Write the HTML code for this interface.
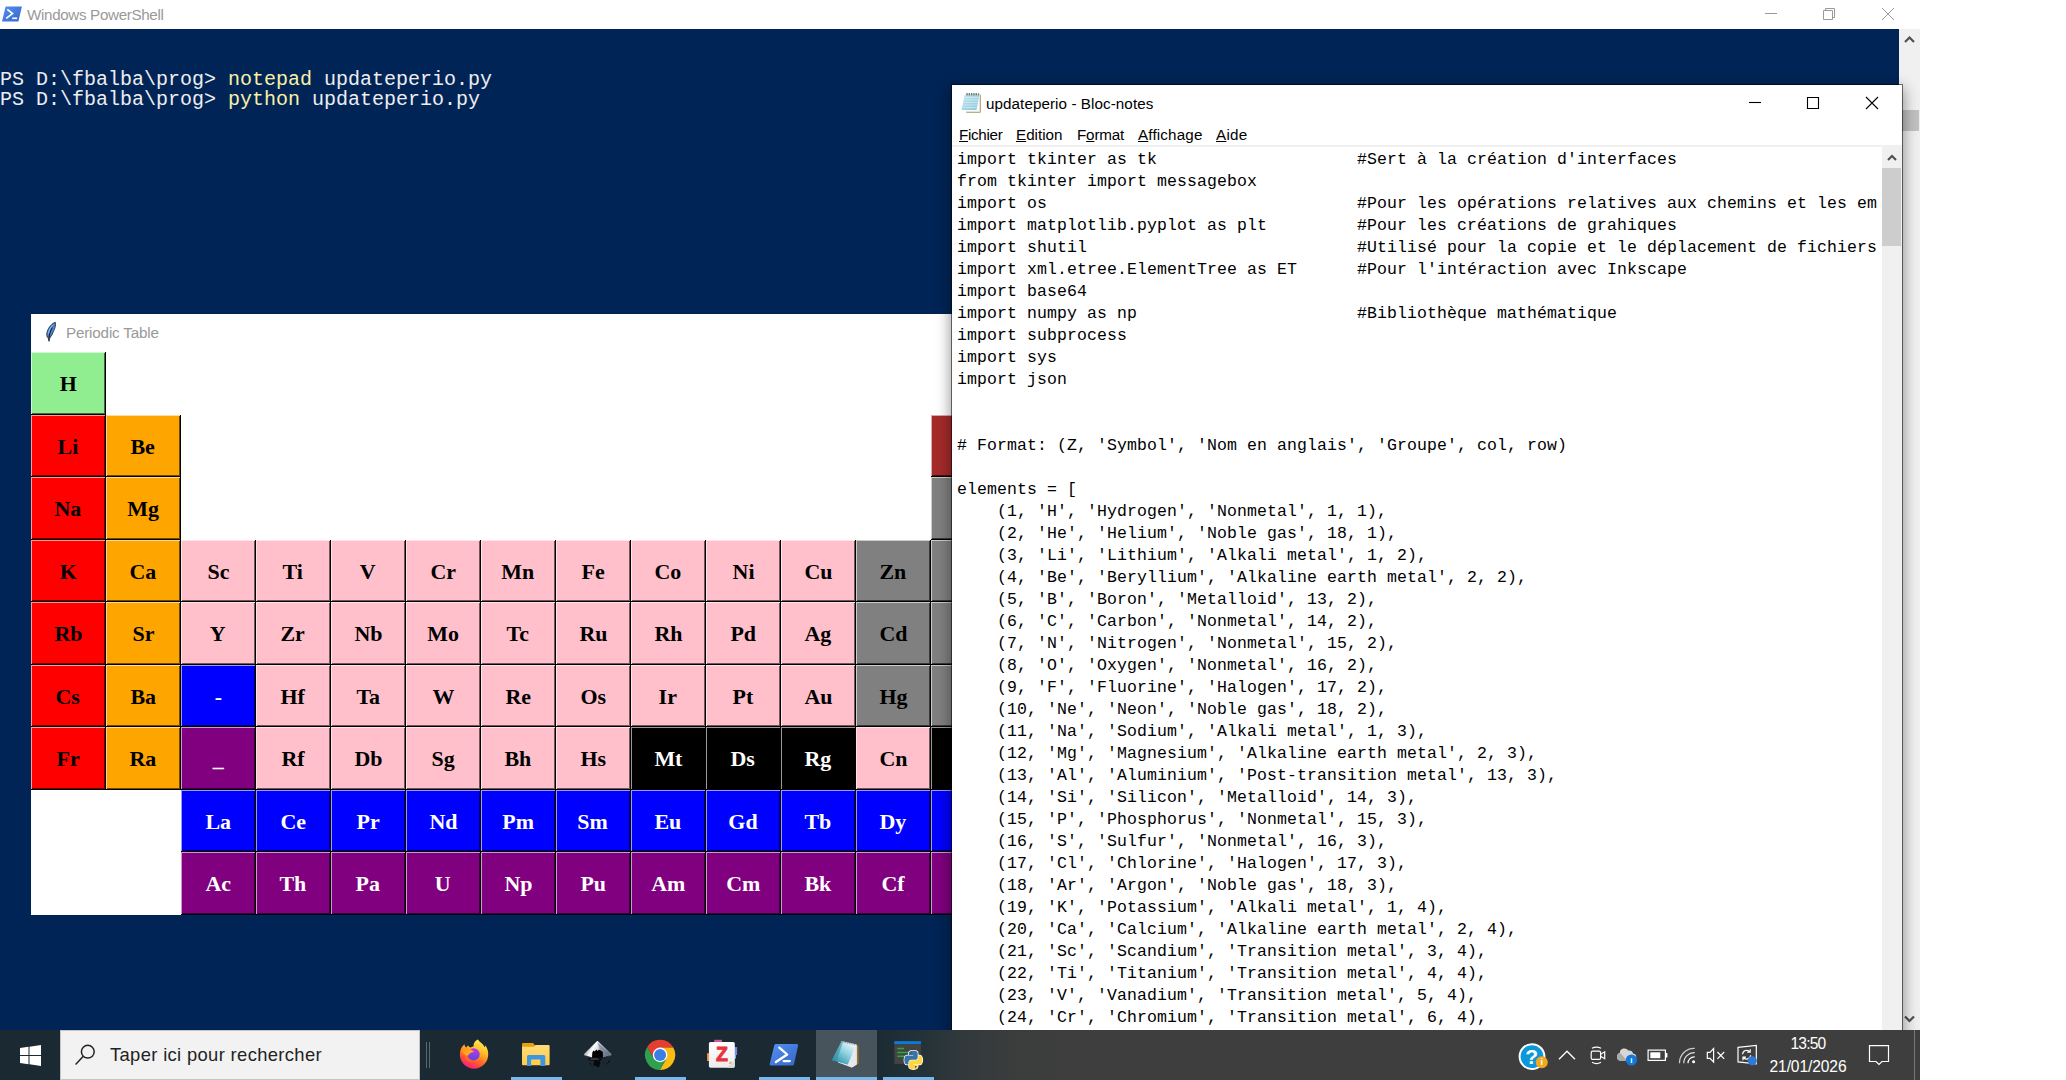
<!DOCTYPE html>
<html lang="fr">
<head>
<meta charset="utf-8">
<title>Bureau</title>
<style>
*{box-sizing:border-box;margin:0;padding:0}
html,body{width:2066px;height:1080px;overflow:hidden;background:#fff}
body{position:relative;font-family:"Liberation Sans",sans-serif;color:#000}
.abs{position:absolute}
/* PowerShell */
#ps{position:absolute;left:0;top:0;width:1920px;height:1030px;background:#fff}
#ps .title{position:absolute;left:27px;top:5px;font-size:15.2px;letter-spacing:-0.34px;line-height:20px;color:#999;white-space:nowrap}
#console{position:absolute;left:0;top:29px;width:1899px;height:1001px;background:#012456}
#console pre{position:absolute;left:0;top:41px;font-family:"Liberation Mono",monospace;font-size:20px;line-height:20px;color:#eeedf0;white-space:pre}
#console pre b{font-weight:normal;color:#f9f1a5}
#psscroll{position:absolute;left:1899px;top:29px;width:21px;height:1001px;background:#f0f0f0}
#psscroll .thumb{position:absolute;left:1px;top:81px;width:19px;height:21px;background:#c1c1c1}
/* Tk window */
#tk{position:absolute;left:31px;top:314px;width:930px;height:601px;background:#fff}
#tk .title{position:absolute;left:35px;top:9px;font-size:15.2px;letter-spacing:-0.17px;line-height:20px;color:#999;white-space:nowrap}
.c{position:absolute;width:75px;font-family:"Liberation Serif",serif;font-weight:bold;font-size:21px;text-align:center;color:#000;display:flex;align-items:center;justify-content:center;padding-top:3px;padding-right:1px}
.c.o{padding-top:2px}
.c span{display:inline-block;transform:scaleX(1.045)}
.k-nm{background:#90ee90;box-shadow:inset -1px -1px 0 #000,inset 1px 1px 0 #d2f8d2,inset -2px -2px 0 #406b40}
.k-alk{background:#ff0000;box-shadow:inset -1px -1px 0 #000,inset 1px 1px 0 #ff9999,inset -2px -2px 0 #720000}
.k-alke{background:#ffa500;box-shadow:inset -1px -1px 0 #000,inset 1px 1px 0 #ffdb99,inset -2px -2px 0 #724a00}
.k-tm{background:#ffc0cb;box-shadow:inset -1px -1px 0 #000,inset 1px 1px 0 #ffe5ea,inset -2px -2px 0 #72565b}
.k-ptm{background:#808080;box-shadow:inset -1px -1px 0 #000,inset 1px 1px 0 #cccccc,inset -2px -2px 0 #393939}
.k-met{background:#a52a2a;box-shadow:inset -1px -1px 0 #000,inset 1px 1px 0 #dba9a9,inset -2px -2px 0 #4a1212}
.k-lan{background:#0000ff;color:#fff;box-shadow:inset -1px -1px 0 #000,inset 1px 1px 0 #9999ff,inset -2px -2px 0 #000072}
.k-act{background:#800080;color:#fff;box-shadow:inset -1px -1px 0 #000,inset 1px 1px 0 #cc99cc,inset -2px -2px 0 #390039}
.k-unk{background:#000000;color:#fff;box-shadow:inset -1px -1px 0 #000,inset 1px 1px 0 #999999,inset -2px -2px 0 #000000}
/* Notepad */
#np{position:absolute;left:952px;top:85px;width:950px;height:960px;background:#fff;box-shadow:0 4px 14px 1px rgba(0,0,0,.45);outline:1px solid rgba(0,0,0,.52)}
#np .title{position:absolute;left:34px;top:9px;font-size:15.2px;letter-spacing:0.08px;line-height:20px;white-space:nowrap}
#np .menu{position:absolute;left:0;top:38px;width:950px;height:24px;border-bottom:2px solid #f0f0f0;font-size:15.2px;line-height:20px}
#np .menu span{position:absolute;top:2px;white-space:nowrap}
#np .menu u{text-decoration-thickness:1px;text-underline-offset:1px}
#np pre{position:absolute;left:5px;top:64px;width:925px;overflow:hidden;font-family:"Liberation Mono",monospace;font-size:16.5px;letter-spacing:0.098px;line-height:22px;color:#000;white-space:pre}
#npscroll{position:absolute;left:930px;top:62px;width:20px;height:900px;background:#f0f0f0}
#npscroll .thumb{position:absolute;left:0;top:21px;width:19px;height:78px;background:#cdcdcd}
/* Taskbar */
#tb{position:absolute;left:0;top:1030px;width:1920px;height:50px;background:linear-gradient(90deg,#1b2a32 0,#1b2a32 870px,#233138 920px,#31393c 962px,#3b3c3c 1010px,#3e3e3e 1100px,#3e3e3e 1920px);color:#fff}
#search{position:absolute;left:60px;top:0;width:360px;height:50px;background:#f2f2f2;box-shadow:inset 0 0 0 1px #c4c4c4}
#search span{position:absolute;left:50px;top:13px;font-size:18.4px;letter-spacing:0.34px;line-height:24px;color:#222;white-space:nowrap}
.ind{position:absolute;top:47px;height:3px;background:#76b9ed}
#clock{position:absolute;left:1748px;top:2px;width:120px;text-align:center;font-size:15.6px;letter-spacing:-0.11px;line-height:23px;color:#fff}
</style>
</head>
<body>
<div id="ps">
  <svg class="abs" style="left:2px;top:6px" width="21" height="16" viewBox="0 0 21 16"><defs><linearGradient id="pst" x1="0" y1="0" x2="1" y2="1"><stop offset="0" stop-color="#528ff2"/><stop offset="1" stop-color="#3567c8"/></linearGradient></defs><path d="M3.600 .4H19.900L16.400 15.600H0Z" fill="url(#pst)"/><path d="M5.300 3.400L10.500 7.600L4.200 12.400" fill="none" stroke="#fff" stroke-width="1.700"/><path d="M10.200 12.300H15.200" stroke="#fff" stroke-width="1.600"/></svg>
  <div class="title">Windows PowerShell</div>
  <svg class="abs" style="left:1760px;top:4px" width="140" height="22" viewBox="0 0 140 22" fill="none" stroke="#999" stroke-width="1"><path d="M5 9.5H17"/><path d="M63.500 6.500H72.500V15.500H63.500Z"/><path d="M65.500 6.500V4.500H74.500V13.500H72.500"/><path d="M122 4L134 16M134 4L122 16"/></svg>
  <div id="console"><pre>PS D:\fbalba\prog&gt; <b>notepad</b> updateperio.py
PS D:\fbalba\prog&gt; <b>python</b> updateperio.py</pre></div>
  <div id="psscroll"><div class="thumb"></div>
    <svg class="abs" style="left:5px;top:6px" width="11" height="8" viewBox="0 0 11 8"><path d="M1 7L5.500 2.500L10 7" fill="none" stroke="#505050" stroke-width="2.200"/></svg>
    <svg class="abs" style="left:5px;top:986px" width="11" height="8" viewBox="0 0 11 8"><path d="M1 1.500L5.500 6L10 1.500" fill="none" stroke="#505050" stroke-width="2.200"/></svg>
  </div>
</div>

<div id="tk">
  <svg class="abs" style="left:0;top:0" width="40" height="38" viewBox="0 0 40 38"><path d="M24.300 8.300C21.400 9.200 17.600 13 16.300 17.500C15.700 19.500 15.600 21.500 16 22.700L17.200 23.700L18 27.300L18.800 23.900C20.300 22.200 21.700 19.600 22.400 17.600C23.600 15 24.900 12 24.300 8.300Z" fill="#4a89de" stroke="#2a2a2a" stroke-width=".9"/><path d="M22.800 10C19.800 12 17.700 15.500 17 19.800L18 19.400C18.600 15.800 20.400 12.600 22.800 10Z" fill="#a4cff6"/><path d="M21.300 13.600C19.600 16.500 18.500 20 17.900 24" stroke="#0b0b0b" stroke-width="1" fill="none"/></svg>
  <div class="title">Periodic Table</div>
</div>
<div class="c k-nm o" style="left:31px;top:352px;height:63px"><span>H</span></div>
<div class="c k-alk" style="left:31px;top:415px;height:62px"><span>Li</span></div>
<div class="c k-alke" style="left:106px;top:415px;height:62px"><span>Be</span></div>
<div class="c k-met" style="left:931px;top:415px;height:62px"><span>B</span></div>
<div class="c k-alk o" style="left:31px;top:477px;height:63px"><span>Na</span></div>
<div class="c k-alke o" style="left:106px;top:477px;height:63px"><span>Mg</span></div>
<div class="c k-ptm o" style="left:931px;top:477px;height:63px"><span>Al</span></div>
<div class="c k-alk" style="left:31px;top:540px;height:62px"><span>K</span></div>
<div class="c k-alke" style="left:106px;top:540px;height:62px"><span>Ca</span></div>
<div class="c k-tm" style="left:181px;top:540px;height:62px"><span>Sc</span></div>
<div class="c k-tm" style="left:256px;top:540px;height:62px"><span>Ti</span></div>
<div class="c k-tm" style="left:331px;top:540px;height:62px"><span>V</span></div>
<div class="c k-tm" style="left:406px;top:540px;height:62px"><span>Cr</span></div>
<div class="c k-tm" style="left:481px;top:540px;height:62px"><span>Mn</span></div>
<div class="c k-tm" style="left:556px;top:540px;height:62px"><span>Fe</span></div>
<div class="c k-tm" style="left:631px;top:540px;height:62px"><span>Co</span></div>
<div class="c k-tm" style="left:706px;top:540px;height:62px"><span>Ni</span></div>
<div class="c k-tm" style="left:781px;top:540px;height:62px"><span>Cu</span></div>
<div class="c k-ptm" style="left:856px;top:540px;height:62px"><span>Zn</span></div>
<div class="c k-ptm" style="left:931px;top:540px;height:62px"><span>Ga</span></div>
<div class="c k-alk o" style="left:31px;top:602px;height:63px"><span>Rb</span></div>
<div class="c k-alke o" style="left:106px;top:602px;height:63px"><span>Sr</span></div>
<div class="c k-tm o" style="left:181px;top:602px;height:63px"><span>Y</span></div>
<div class="c k-tm o" style="left:256px;top:602px;height:63px"><span>Zr</span></div>
<div class="c k-tm o" style="left:331px;top:602px;height:63px"><span>Nb</span></div>
<div class="c k-tm o" style="left:406px;top:602px;height:63px"><span>Mo</span></div>
<div class="c k-tm o" style="left:481px;top:602px;height:63px"><span>Tc</span></div>
<div class="c k-tm o" style="left:556px;top:602px;height:63px"><span>Ru</span></div>
<div class="c k-tm o" style="left:631px;top:602px;height:63px"><span>Rh</span></div>
<div class="c k-tm o" style="left:706px;top:602px;height:63px"><span>Pd</span></div>
<div class="c k-tm o" style="left:781px;top:602px;height:63px"><span>Ag</span></div>
<div class="c k-ptm o" style="left:856px;top:602px;height:63px"><span>Cd</span></div>
<div class="c k-ptm o" style="left:931px;top:602px;height:63px"><span>In</span></div>
<div class="c k-alk" style="left:31px;top:665px;height:62px"><span>Cs</span></div>
<div class="c k-alke" style="left:106px;top:665px;height:62px"><span>Ba</span></div>
<div class="c k-lan" style="left:181px;top:665px;height:62px"><span>-</span></div>
<div class="c k-tm" style="left:256px;top:665px;height:62px"><span>Hf</span></div>
<div class="c k-tm" style="left:331px;top:665px;height:62px"><span>Ta</span></div>
<div class="c k-tm" style="left:406px;top:665px;height:62px"><span>W</span></div>
<div class="c k-tm" style="left:481px;top:665px;height:62px"><span>Re</span></div>
<div class="c k-tm" style="left:556px;top:665px;height:62px"><span>Os</span></div>
<div class="c k-tm" style="left:631px;top:665px;height:62px"><span>Ir</span></div>
<div class="c k-tm" style="left:706px;top:665px;height:62px"><span>Pt</span></div>
<div class="c k-tm" style="left:781px;top:665px;height:62px"><span>Au</span></div>
<div class="c k-ptm" style="left:856px;top:665px;height:62px"><span>Hg</span></div>
<div class="c k-ptm" style="left:931px;top:665px;height:62px"><span>Tl</span></div>
<div class="c k-alk o" style="left:31px;top:727px;height:63px"><span>Fr</span></div>
<div class="c k-alke o" style="left:106px;top:727px;height:63px"><span>Ra</span></div>
<div class="c k-act o" style="left:181px;top:727px;height:63px"><span>_</span></div>
<div class="c k-tm o" style="left:256px;top:727px;height:63px"><span>Rf</span></div>
<div class="c k-tm o" style="left:331px;top:727px;height:63px"><span>Db</span></div>
<div class="c k-tm o" style="left:406px;top:727px;height:63px"><span>Sg</span></div>
<div class="c k-tm o" style="left:481px;top:727px;height:63px"><span>Bh</span></div>
<div class="c k-tm o" style="left:556px;top:727px;height:63px"><span>Hs</span></div>
<div class="c k-unk o" style="left:631px;top:727px;height:63px"><span>Mt</span></div>
<div class="c k-unk o" style="left:706px;top:727px;height:63px"><span>Ds</span></div>
<div class="c k-unk o" style="left:781px;top:727px;height:63px"><span>Rg</span></div>
<div class="c k-tm o" style="left:856px;top:727px;height:63px"><span>Cn</span></div>
<div class="c k-unk o" style="left:931px;top:727px;height:63px"><span>Nh</span></div>
<div class="c k-lan" style="left:181px;top:790px;height:62px"><span>La</span></div>
<div class="c k-lan" style="left:256px;top:790px;height:62px"><span>Ce</span></div>
<div class="c k-lan" style="left:331px;top:790px;height:62px"><span>Pr</span></div>
<div class="c k-lan" style="left:406px;top:790px;height:62px"><span>Nd</span></div>
<div class="c k-lan" style="left:481px;top:790px;height:62px"><span>Pm</span></div>
<div class="c k-lan" style="left:556px;top:790px;height:62px"><span>Sm</span></div>
<div class="c k-lan" style="left:631px;top:790px;height:62px"><span>Eu</span></div>
<div class="c k-lan" style="left:706px;top:790px;height:62px"><span>Gd</span></div>
<div class="c k-lan" style="left:781px;top:790px;height:62px"><span>Tb</span></div>
<div class="c k-lan" style="left:856px;top:790px;height:62px"><span>Dy</span></div>
<div class="c k-lan" style="left:931px;top:790px;height:62px"><span>Ho</span></div>
<div class="c k-act o" style="left:181px;top:852px;height:63px"><span>Ac</span></div>
<div class="c k-act o" style="left:256px;top:852px;height:63px"><span>Th</span></div>
<div class="c k-act o" style="left:331px;top:852px;height:63px"><span>Pa</span></div>
<div class="c k-act o" style="left:406px;top:852px;height:63px"><span>U</span></div>
<div class="c k-act o" style="left:481px;top:852px;height:63px"><span>Np</span></div>
<div class="c k-act o" style="left:556px;top:852px;height:63px"><span>Pu</span></div>
<div class="c k-act o" style="left:631px;top:852px;height:63px"><span>Am</span></div>
<div class="c k-act o" style="left:706px;top:852px;height:63px"><span>Cm</span></div>
<div class="c k-act o" style="left:781px;top:852px;height:63px"><span>Bk</span></div>
<div class="c k-act o" style="left:856px;top:852px;height:63px"><span>Cf</span></div>
<div class="c k-act o" style="left:931px;top:852px;height:63px"><span>Es</span></div>

<div id="np">
  <svg class="abs" style="left:0;top:0" width="40" height="36" viewBox="0 0 40 36"><defs><linearGradient id="npt" x1="0" y1="0" x2="1" y2="1"><stop offset="0" stop-color="#c9e8f1"/><stop offset="1" stop-color="#86c6d9"/></linearGradient></defs><rect x="14" y="9.600" width="14.800" height="18.200" rx=".8" fill="#a39566"/><rect x="14" y="9.600" width="13.800" height="17.200" fill="#f7f8f6"/><path d="M12.800 9.400H27.600L24.400 25.100H9.600Z" fill="url(#npt)"/><path d="M13 12.500H26.500M12.400 15H26M11.900 17.500H25.500M11.400 20H25M10.900 22.500H24.500" stroke="#d3edf4" stroke-width=".9" opacity=".8"/><path d="M14.400 9.200H26.800" stroke="#70777a" stroke-width="2.400" stroke-dasharray="1.300 1"/></svg>
  <div class="title">updateperio - Bloc-notes</div>
  <svg class="abs" style="left:790px;top:8px" width="150" height="22" viewBox="0 0 150 22" fill="none" stroke="#000" stroke-width="1.1"><path d="M7 9.500H19"/><path d="M65.500 4.500H76.500V15.500H65.500Z"/><path d="M124 4L136 16M136 4L124 16"/></svg>
  <div class="menu"><span style="left:7px;letter-spacing:-0.3px"><u>F</u>ichier</span><span style="left:64px;letter-spacing:0.01px"><u>E</u>dition</span><span style="left:125px;letter-spacing:-0.18px">F<u>o</u>rmat</span><span style="left:186px;letter-spacing:0.16px"><u>A</u>ffichage</span><span style="left:264px;letter-spacing:0.28px"><u>A</u>ide</span></div>
  <pre>import tkinter as tk                    #Sert à la création d'interfaces
from tkinter import messagebox
import os                               #Pour les opérations relatives aux chemins et les em
import matplotlib.pyplot as plt         #Pour les créations de grahiques
import shutil                           #Utilisé pour la copie et le déplacement de fichiers
import xml.etree.ElementTree as ET      #Pour l'intéraction avec Inkscape
import base64
import numpy as np                      #Bibliothèque mathématique
import subprocess
import sys
import json


# Format: (Z, 'Symbol', 'Nom en anglais', 'Groupe', col, row)

elements = [
    (1, 'H', 'Hydrogen', 'Nonmetal', 1, 1),
    (2, 'He', 'Helium', 'Noble gas', 18, 1),
    (3, 'Li', 'Lithium', 'Alkali metal', 1, 2),
    (4, 'Be', 'Beryllium', 'Alkaline earth metal', 2, 2),
    (5, 'B', 'Boron', 'Metalloid', 13, 2),
    (6, 'C', 'Carbon', 'Nonmetal', 14, 2),
    (7, 'N', 'Nitrogen', 'Nonmetal', 15, 2),
    (8, 'O', 'Oxygen', 'Nonmetal', 16, 2),
    (9, 'F', 'Fluorine', 'Halogen', 17, 2),
    (10, 'Ne', 'Neon', 'Noble gas', 18, 2),
    (11, 'Na', 'Sodium', 'Alkali metal', 1, 3),
    (12, 'Mg', 'Magnesium', 'Alkaline earth metal', 2, 3),
    (13, 'Al', 'Aluminium', 'Post-transition metal', 13, 3),
    (14, 'Si', 'Silicon', 'Metalloid', 14, 3),
    (15, 'P', 'Phosphorus', 'Nonmetal', 15, 3),
    (16, 'S', 'Sulfur', 'Nonmetal', 16, 3),
    (17, 'Cl', 'Chlorine', 'Halogen', 17, 3),
    (18, 'Ar', 'Argon', 'Noble gas', 18, 3),
    (19, 'K', 'Potassium', 'Alkali metal', 1, 4),
    (20, 'Ca', 'Calcium', 'Alkaline earth metal', 2, 4),
    (21, 'Sc', 'Scandium', 'Transition metal', 3, 4),
    (22, 'Ti', 'Titanium', 'Transition metal', 4, 4),
    (23, 'V', 'Vanadium', 'Transition metal', 5, 4),
    (24, 'Cr', 'Chromium', 'Transition metal', 6, 4),</pre>
  <div id="npscroll"><div class="thumb"></div>
    <svg class="abs" style="left:4.500px;top:6.500px" width="10" height="8" viewBox="0 0 10 8"><path d="M1 6L5 2L9 6" fill="none" stroke="#505050" stroke-width="2.100"/></svg>
  </div>
</div>

<div id="tb">
  <svg class="abs" style="left:20px;top:15px" width="21" height="21" viewBox="0 0 21 21" fill="#fff"><path d="M0 3L8.500 1.800V10H0ZM9.500 1.650L21 0V10H9.500ZM0 11H8.500V19.200L0 18ZM9.500 11H21V21L9.500 19.350Z"/></svg>
  <div id="search">
    <svg class="abs" style="left:15px;top:14px" width="22" height="22" viewBox="0 0 22 22" fill="none" stroke="#222" stroke-width="1.5"><circle cx="12.800" cy="7.700" r="6.400"/><path d="M8.300 12.300L.6 20.500"/></svg>
    <span>Taper ici pour rechercher</span>
  </div>
  <div class="abs" style="left:426px;top:12px;width:1px;height:26px;background:#5a6870"></div>
  <div class="abs" style="left:429px;top:12px;width:1px;height:26px;background:#5a6870"></div>
  <div class="abs" style="left:816px;top:0;width:61px;height:50px;background:#47545b"></div>
  <div class="ind" style="left:511px;width:51px"></div>
  <div class="ind" style="left:635px;width:51px"></div>
  <div class="ind" style="left:759px;width:51px"></div>
  <div class="ind" style="left:816px;width:61px"></div>
  <div class="ind" style="left:883px;width:51px"></div>
  <svg class="abs" style="left:0;top:0" width="1920" height="50" viewBox="0 0 1920 50">
<defs>
<linearGradient id="ffb" gradientUnits="userSpaceOnUse" x1="482" y1="10" x2="468" y2="40"><stop offset="0" stop-color="#fff45a"/><stop offset=".3" stop-color="#ffc22e"/><stop offset=".55" stop-color="#ff8420"/><stop offset=".74" stop-color="#ff4a3a"/><stop offset=".9" stop-color="#fb2577"/><stop offset="1" stop-color="#e0149e"/></linearGradient>
<linearGradient id="ffg" x1="0" y1="0" x2="0" y2="1"><stop offset="0" stop-color="#c03be3"/><stop offset="1" stop-color="#5b45e0"/></linearGradient>
<linearGradient id="ffh" x1="0" y1="0" x2="1" y2="1"><stop offset="0" stop-color="#ff8c1a"/><stop offset=".6" stop-color="#ffae22"/><stop offset="1" stop-color="#ff5e2e"/></linearGradient>
<linearGradient id="fold" x1="0" y1="0" x2="0" y2="1"><stop offset="0" stop-color="#ffdc7a"/><stop offset="1" stop-color="#ffcc45"/></linearGradient>
<linearGradient id="ink" gradientUnits="userSpaceOnUse" x1="586" y1="16" x2="606" y2="27"><stop offset="0" stop-color="#8c8c8c"/><stop offset=".32" stop-color="#ffffff"/><stop offset=".6" stop-color="#c4c8cf"/><stop offset="1" stop-color="#7a8698"/></linearGradient>
<linearGradient id="psg" x1="0" y1="0" x2="1" y2="1"><stop offset="0" stop-color="#5391f5"/><stop offset="1" stop-color="#3565c4"/></linearGradient>
<linearGradient id="npg" gradientUnits="userSpaceOnUse" x1="850" y1="13" x2="836" y2="33"><stop offset="0" stop-color="#e4f4f8"/><stop offset=".45" stop-color="#8fd0df"/><stop offset="1" stop-color="#2b93a8"/></linearGradient>
<linearGradient id="zg" x1="0" y1="0" x2="0" y2="1"><stop offset="0" stop-color="#ffffff"/><stop offset="1" stop-color="#ececec"/></linearGradient>
</defs>
<!-- Firefox -->
<path d="M477.900 9.600C479.600 12.400 483.200 13.800 484.600 17.200L485.300 15.600C487.400 18 488.300 21.500 488.200 24.600A14.150 14.150 0 0 1 459.900 24.600C459.800 20 461.600 16.400 464.500 14.200C464.500 15.700 465.200 16.800 466.400 17.600C466.800 16.600 467.400 16 468.300 15.600C468.700 16.800 469.600 17.400 470.800 17.600C472 16.800 473 16.200 473.800 16.200C473 13.800 475 11 477.900 9.600Z" fill="url(#ffb)"/>
<circle cx="473.600" cy="24.300" r="6.100" fill="url(#ffg)"/>
<path d="M461.300 20C464.500 17.600 468.800 18 471.200 19.800C472.200 20.600 473.200 21.200 474.300 21.400C471.600 22.200 469.200 23.300 468 25.800C465.300 25.300 462.600 23.200 461.300 20Z" fill="url(#ffh)"/>
<path d="M468 25.800C467.500 29 470 31.600 473.500 31.400C470.500 33 466 31 465.200 27C466 27 467 26.600 468 25.800Z" fill="#ff6a2a" opacity=".9"/>
<!-- Explorer -->
<path d="M522 14.200A1.200 1.200 0 0 1 523.200 13H533L535 15.200V17H522Z" fill="#e4a20a"/>
<path d="M522 16.800H534L535.500 15H548.600A1 1 0 0 1 549.600 16V34.200A1 1 0 0 1 548.600 35.200H523A1 1 0 0 1 522 34.200Z" fill="url(#fold)"/>
<path d="M527 36V26.500A1.500 1.500 0 0 1 528.500 25H543.800A1.500 1.500 0 0 1 545.300 26.500V36H540.400V29.400H531.100V36Z" fill="#3c96e0"/>
<!-- Inkscape -->
<path d="M596.300 11.700Q597.400 10.500 598.500 11.700L611.200 23.700Q612 24.700 610.800 25.400L603 27.900H591.800L584.800 25.400Q583.500 24.700 584.300 23.700Z" fill="url(#ink)"/>
<path d="M597.400 12L610.500 24.300L603 27.500L600 20Z" fill="#5d6b80" opacity=".55"/>
<path d="M592 27.900L592.300 22.600L593.600 20.400L594.800 21.600L596.200 19.600L597.600 21L599 19.400L600.500 20.600C602.200 21 603.300 22.400 602.900 23.800L603 27.900Z" fill="#000"/>
<path d="M584.600 24.900L591.800 27.600H603L610.800 24.900L604 28.600H591Z" fill="#15181c"/>
<ellipse cx="595" cy="29.400" rx="7.400" ry="1.500" fill="#0c0d10"/>
<ellipse cx="594.500" cy="29" rx="4.500" ry=".6" fill="#5a6270"/>
<path d="M594.200 30.500C594.600 32 593.200 33.200 593.400 34.600C593.600 36 595.200 36.200 596 35.600C596.300 36.800 597.200 37.500 598.200 37.300C599.600 37 599.800 35.600 599.500 34.400C600.600 34 600.800 32.800 600 32.200C599.600 31.600 599.600 31 599.800 30.500Z" fill="#07080a"/>
<circle cx="609" cy="31.600" r="1" fill="#0d0d0d"/><circle cx="607" cy="33.700" r=".8" fill="#0d0d0d"/><circle cx="590.400" cy="33.800" r=".9" fill="#0d0d0d"/><circle cx="603.500" cy="32.300" r=".6" fill="#1a1a1a"/><circle cx="592" cy="36" r=".6" fill="#111"/>
<!-- Chrome -->
<path d="M660.10 17.60L673.32 17.60A15.1 15.1 0 0 0 647.17 17.10L653.78 28.55L660.1 24.9Z" fill="#e53d30"/><path d="M666.42 28.55L659.81 40.00A15.1 15.1 0 0 0 673.32 17.60L660.10 17.60L660.1 24.9Z" fill="#fabb12"/><path d="M653.78 28.55L647.17 17.10A15.1 15.1 0 0 0 659.81 40.00L666.42 28.55L660.1 24.9Z" fill="#2fa04e"/><circle cx="660.1" cy="24.9" r="7.3" fill="#fff"/><circle cx="660.1" cy="24.9" r="6.0" fill="#3b7fe6"/>
<!-- Zotero -->
<rect x="714.200" y="9.800" width="7.800" height="3" fill="#d2589c"/>
<rect x="733" y="17.100" width="4.100" height="7.900" fill="#7d85ec"/>
<rect x="733" y="25" width="3" height="3.700" fill="#6fb4da"/>
<rect x="707" y="23.200" width="3" height="7.800" fill="#f08b3d"/>
<rect x="708.900" y="11.900" width="25.900" height="25.800" rx="1.600" fill="url(#zg)"/>
<path d="M734.800 30L727 37.700H733.200A1.600 1.600 0 0 0 734.800 36.100Z" fill="#dcdcdc"/>
<path d="M728.400 33.700L731.400 30.700V33.700Z" fill="#d9b23c"/>
<text x="721.900" y="31" text-anchor="middle" font-family="Liberation Sans, sans-serif" font-weight="bold" font-size="19.500" fill="#e8323f" stroke="#e8323f" stroke-width=".9">Z</text>
<!-- PowerShell -->
<path d="M776 13.900H797A1.200 1.200 0 0 1 798.100 15.400L794 34.300A1.500 1.500 0 0 1 792.600 35.400H770.800A1.200 1.200 0 0 1 769.700 33.900L774.300 15.200A1.800 1.800 0 0 1 776 13.900Z" fill="url(#psg)"/>
<path d="M779.300 17.600L787.200 24.500L775.900 32" fill="none" stroke="#fff" stroke-width="2.300" stroke-linecap="round" stroke-linejoin="round"/>
<path d="M783.600 31.100H789.800" stroke="#fff" stroke-width="2.300" stroke-linecap="round"/>
<!-- Notepad -->
<path d="M856.700 15L858.400 15.600L858.700 33.800L856.700 34.600Z" fill="#a0721f"/>
<path d="M841.600 11.200L856.700 14.500L856.700 34.500L851.900 37.500L838 32.400Z" fill="#f4f6f7"/>
<path d="M841.600 11.200L856.200 14.400L848 34.800L831.900 30.300Z" fill="url(#npg)"/>
<path d="M841.600 11.200L843.200 11.550L836.500 31.600L831.900 30.300Z" fill="#2a8fa5" opacity=".55"/>
<path d="M855 18.200L856.700 14.500V34.500L851.900 37.500L847.600 35.400Z" fill="#e3e9ec"/>
<path d="M841.800 11.600L856.500 14.900" stroke="#8a9499" stroke-width="1.300" stroke-dasharray="1 .8"/>
<!-- Python console -->
<rect x="894.300" y="11.200" width="26.600" height="22.700" fill="#434343"/>
<rect x="894.300" y="11.200" width="26.600" height="2.800" fill="#0a7ad8"/>
<path d="M897.300 18.500H904M897.300 22.500H909.400M897.300 26.200H904.500" stroke="#2eaa3c" stroke-width="1.500"/>
<g transform="translate(904.300 20.900) scale(.163)">
<g fill="none" stroke="#fff" stroke-width="9" stroke-linejoin="round">
<path d="M54.920 0C50.340 .020 45.960 .410 42.110 1.090 30.760 3.100 28.700 7.290 28.700 15.030V25.250H55.510V28.660H18.640C10.850 28.660 4.020 33.340 1.890 42.250-.570 52.460-.680 58.840 1.890 69.500 3.790 77.440 8.350 83.090 16.140 83.090H25.360V70.840C25.360 61.990 33.010 54.190 42.110 54.190H68.890C76.340 54.190 82.290 48.050 82.290 40.560V15.030C82.290 7.770 76.160 2.310 68.890 1.090 64.280 .330 59.500-.020 54.920 0Z"/>
<path d="M85.640 28.660V40.560C85.640 49.790 77.810 57.560 68.890 57.560H42.110C34.770 57.560 28.700 63.840 28.700 71.190V96.720C28.700 103.990 35.020 108.260 42.110 110.340 50.590 112.840 58.730 113.290 68.890 110.340 75.640 108.390 82.290 104.460 82.290 96.720V86.500H55.510V83.090H95.700C103.490 83.090 106.400 77.660 109.110 69.500 111.910 61.100 111.790 53.030 109.110 42.250 107.180 34.490 103.500 28.660 95.700 28.660Z"/>
</g>
<path d="M54.920 0C50.340 .020 45.960 .410 42.110 1.090 30.760 3.100 28.700 7.290 28.700 15.030V25.250H55.510V28.660H18.640C10.850 28.660 4.020 33.340 1.890 42.250-.570 52.460-.680 58.840 1.890 69.500 3.790 77.440 8.350 83.090 16.140 83.090H25.360V70.840C25.360 61.990 33.010 54.190 42.110 54.190H68.890C76.340 54.190 82.290 48.050 82.290 40.560V15.030C82.290 7.770 76.160 2.310 68.890 1.090 64.280 .330 59.500-.020 54.920 0ZM40.420 8.220C43.190 8.220 45.450 10.520 45.450 13.340 45.450 16.160 43.190 18.440 40.420 18.440 37.640 18.440 35.390 16.160 35.390 13.340 35.390 10.520 37.640 8.220 40.420 8.220Z" fill="#3873a8" fill-rule="evenodd"/>
<path d="M85.640 28.660V40.560C85.640 49.790 77.810 57.560 68.890 57.560H42.110C34.770 57.560 28.700 63.840 28.700 71.190V96.720C28.700 103.990 35.020 108.260 42.110 110.340 50.590 112.840 58.730 113.290 68.890 110.340 75.640 108.390 82.290 104.460 82.290 96.720V86.500H55.510V83.090H95.700C103.490 83.090 106.400 77.660 109.110 69.500 111.910 61.100 111.790 53.030 109.110 42.250 107.180 34.490 103.500 28.660 95.700 28.660ZM70.580 93.310C73.350 93.310 75.610 95.590 75.610 98.410 75.610 101.230 73.350 103.530 70.580 103.530 67.810 103.530 65.540 101.230 65.540 98.410 65.540 95.590 67.810 93.310 70.580 93.310Z" fill="#ffd545" fill-rule="evenodd"/>
</g>
<!-- Tray -->
<circle cx="1532" cy="26.600" r="12.400" fill="#0b98da" stroke="#fff" stroke-width="2"/>
<text x="1531.600" y="33.800" text-anchor="middle" font-family="Liberation Sans, sans-serif" font-weight="bold" font-size="21" fill="#fff">?</text>
<circle cx="1541.800" cy="32.200" r="6" fill="#f1a91f"/>
<text x="1541.800" y="35.400" text-anchor="middle" font-family="Liberation Sans, sans-serif" font-weight="bold" font-size="9" fill="#fff">i</text>
<path d="M1559 29.200L1567 21.200L1575 29.200" fill="none" stroke="#fff" stroke-width="1.300"/>
<g fill="none" stroke="#fff" stroke-width="1.200">
<rect x="1591.200" y="21.200" width="9.400" height="8.200" rx="1.500"/>
<path d="M1600.600 24.300L1604.700 21.800V28.800L1600.600 26.300"/>
<path d="M1592 18.300Q1596.500 15.800 1601 18.300M1592 32.300Q1596.500 34.800 1601 32.300"/>
</g>
<path d="M1620.500 30.800A4 4 0 0 1 1619.800 23A4.600 4.600 0 0 1 1628.300 20.600A3.600 3.600 0 0 1 1633 23.500A3.500 3.500 0 0 1 1632 30.800Z" fill="#d6d6d6"/>
<path d="M1620.500 30.800A4 4 0 0 1 1619.800 23C1623 25 1624.500 29.500 1629 30.800Z" fill="#a9a9a9"/>
<circle cx="1631.400" cy="30" r="5.600" fill="#1279d9"/>
<text x="1631.400" y="32.900" text-anchor="middle" font-family="Liberation Sans, sans-serif" font-weight="bold" font-size="8" fill="#fff">i</text>
<rect x="1648.100" y="20.100" width="17.300" height="10.300" fill="none" stroke="#fff" stroke-width="1.200"/>
<rect x="1665.800" y="23" width="1.600" height="4.500" fill="#fff"/>
<rect x="1650.300" y="22.300" width="10" height="5.900" fill="#fff"/>
<g fill="none" stroke="#fff" stroke-width="1.200">
<path d="M1679.500 33.300A14.600 14.600 0 0 1 1694.700 18.300" opacity=".75"/>
<path d="M1683.800 33.300A10.300 10.300 0 0 1 1694.700 22.700" opacity=".85"/>
<path d="M1688 33.300A6.200 6.200 0 0 1 1694.700 26.900"/>
</g>
<circle cx="1693.600" cy="31.800" r="1.500" fill="#fff"/>
<g fill="none" stroke="#fff" stroke-width="1.200">
<path d="M1707.300 22.300H1710L1713.600 18.600V32L1710 28.300H1707.300Z"/>
<path d="M1717.400 22L1724.200 28.800M1724.200 22L1717.400 28.800"/>
<path d="M1738 17.400L1756.300 15.400V33.900L1738 31.900Z"/>
<path d="M1742.500 24.200A4.200 4.200 0 0 1 1750 22M1750.200 19.200V22.200H1747.200M1750.700 25.200A4.200 4.200 0 0 1 1743.200 27.400M1743 30.200V27.200H1746"/>
</g>
<circle cx="1752.300" cy="30.800" r="4.600" fill="#2f79d8"/>
<path d="M1869.500 15.600H1888.500V31.500H1882L1879 34.500L1876 31.500H1869.500Z" fill="none" stroke="#fff" stroke-width="1.200"/>
</svg>

  <div id="clock"><span style="letter-spacing:-0.81px">13:50</span><br>21/01/2026</div>
  <div class="abs" style="left:1914px;top:0;width:1px;height:50px;background:#777"></div>
</div>
</body>
</html>
